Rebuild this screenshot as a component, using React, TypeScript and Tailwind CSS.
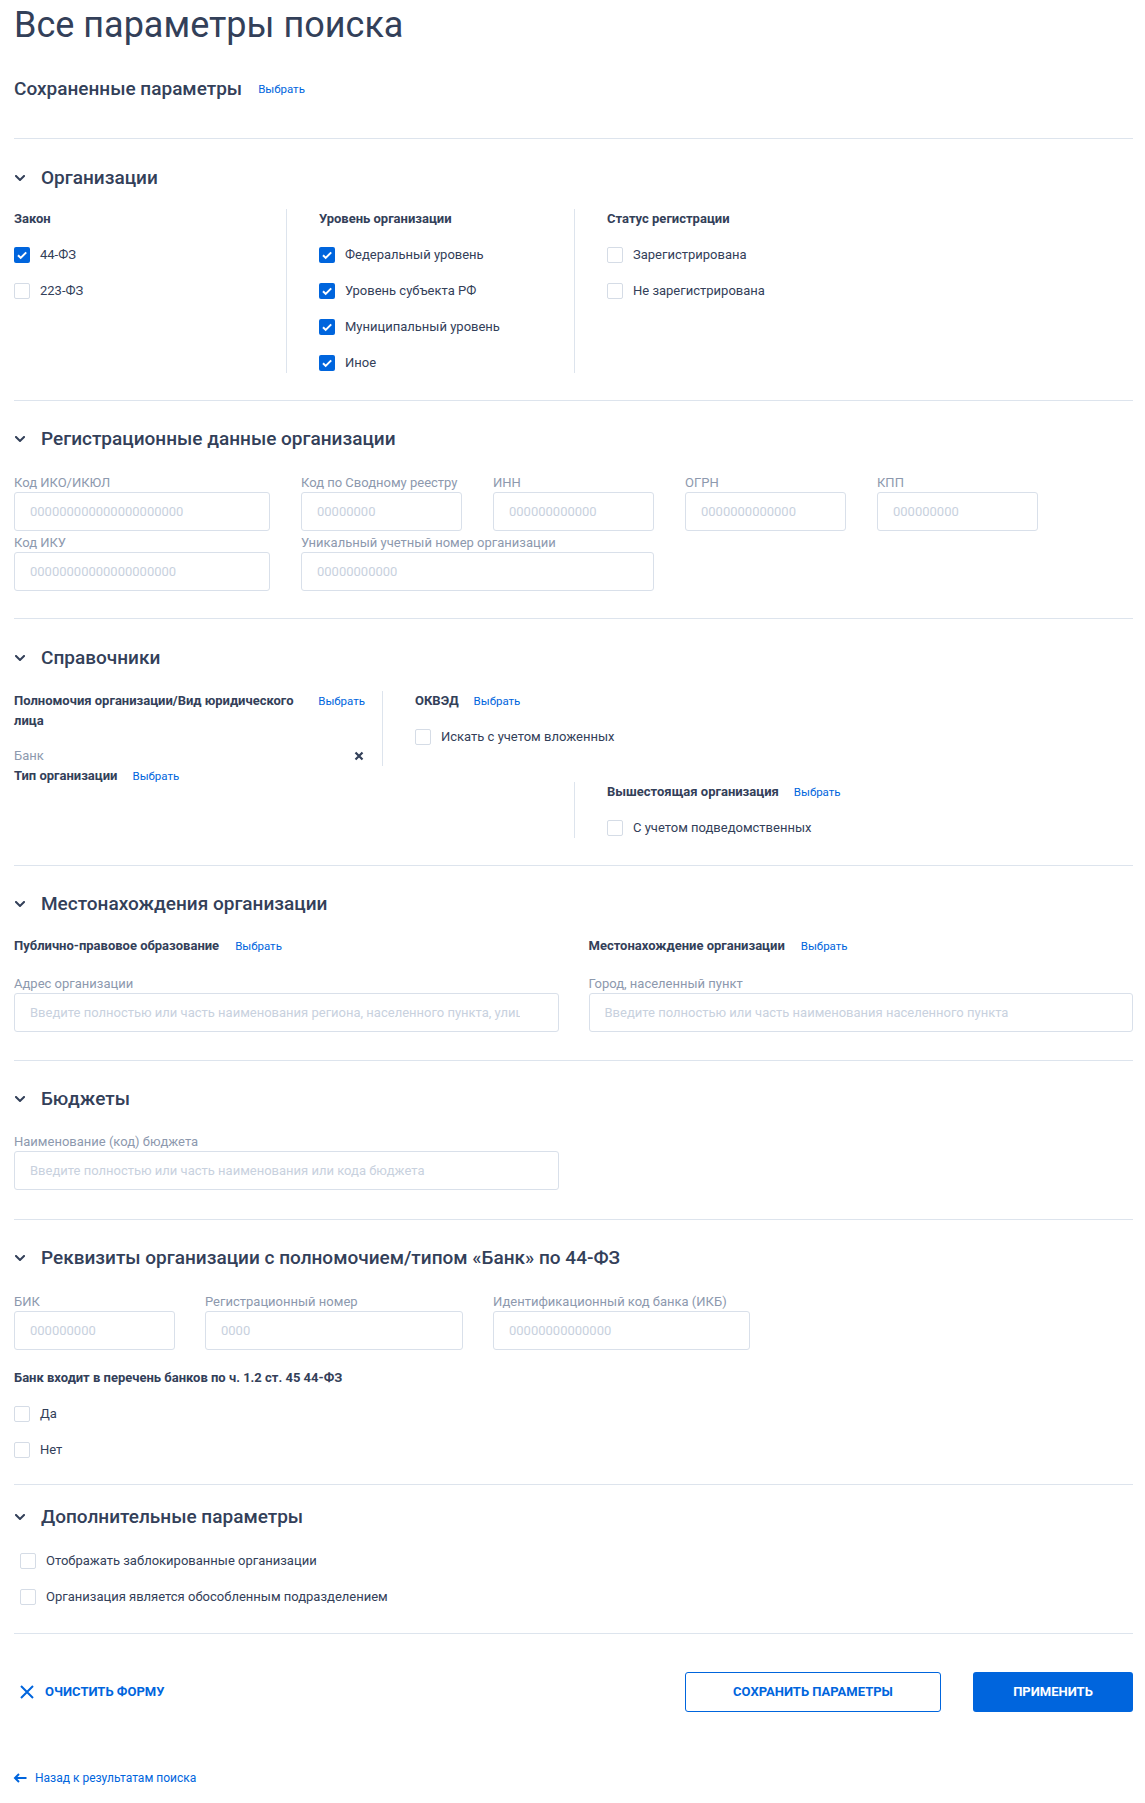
import React from "react";

function Chevron() {
  return (
    <svg width="10" height="6" viewBox="0 0 10 6" className="shrink-0 ml-[1px]">
      <path d="M1 1l4 4 4-4" fill="none" stroke="#334059" strokeWidth="2" strokeLinecap="square" />
    </svg>
  );
}

function Heading({ children }: { children: React.ReactNode }) {
  return (
    <div className="flex items-center h-6 gap-[16px]">
      <Chevron />
      <span className="text-[19px] leading-6 font-medium text-[#334059]">{children}</span>
    </div>
  );
}

function Check({ checked, label }: { checked?: boolean; label: string }) {
  return (
    <div className="flex items-center h-5 gap-[10px]">
      {checked ? (
        <span className="w-4 h-4 rounded-[2px] bg-[#0065dd] flex items-center justify-center shrink-0">
          <svg width="16" height="16" viewBox="0 0 16 16">
            <path d="M4 8.2l2.7 2.7L12.2 5.4" fill="none" stroke="#ffffff" strokeWidth="2" />
          </svg>
        </span>
      ) : (
        <span className="w-4 h-4 rounded-[2px] border border-[#d5dce6] bg-white shrink-0" />
      )}
      <span className="text-[13px] leading-5 text-[#334059] whitespace-nowrap">{label}</span>
    </div>
  );
}

function Pick() {
  return <span className="text-[11.5px] leading-5 text-[#0065dd] whitespace-nowrap cursor-pointer">Выбрать</span>;
}

function ColHead({ children }: { children: React.ReactNode }) {
  return <div className="text-[13px] leading-5 font-bold text-[#334059] whitespace-nowrap">{children}</div>;
}

function Field({ label, ph, cls, inputCls }: { label: string; ph: string; cls: string; inputCls?: string }) {
  return (
    <div className={cls}>
      <div className="text-[13px] leading-[19px] text-[#8d99ae] whitespace-nowrap">{label}</div>
      <input
        className={
          "block w-full h-[39px] border border-[#d9e0ea] rounded-[3px] pl-[15px] text-[13px] text-[#334059] placeholder:text-[#c8d1de] outline-none bg-white " +
          (inputCls ?? "pr-[15px]")
        }
        placeholder={ph}
      />
    </div>
  );
}

export default function App() {
  return (
    <div className="min-h-[1803px] bg-white font-['Roboto',sans-serif] text-[#334059] pl-[14px]">
      <div className="w-[1119px]">
        <h1 className="text-[36px] leading-[50px] font-normal text-[#334059]">Все параметры поиска</h1>
        <div className="mt-[27px] flex items-center h-6 gap-4">
          <span className="text-[19px] leading-6 font-medium">Сохраненные параметры</span>
          <Pick />
        </div>

        {/* Организации */}
        <div className="mt-[37px] border-t border-[#dde4ed] pt-[27px] pb-[27px]">
          <Heading>Организации</Heading>
          <div className="mt-[19px] flex">
            <div className="w-[272px]">
              <ColHead>Закон</ColHead>
              <div className="mt-4 flex flex-col gap-4">
                <Check checked label="44-ФЗ" />
                <Check label="223-ФЗ" />
              </div>
            </div>
            <div className="w-[288px] border-l border-[#dde4ed] pl-8">
              <ColHead>Уровень организации</ColHead>
              <div className="mt-4 flex flex-col gap-4">
                <Check checked label="Федеральный уровень" />
                <Check checked label="Уровень субъекта РФ" />
                <Check checked label="Муниципальный уровень" />
                <Check checked label="Иное" />
              </div>
            </div>
            <div className="border-l border-[#dde4ed] pl-8">
              <ColHead>Статус регистрации</ColHead>
              <div className="mt-4 flex flex-col gap-4">
                <Check label="Зарегистрирована" />
                <Check label="Не зарегистрирована" />
              </div>
            </div>
          </div>
        </div>

        {/* Регистрационные данные */}
        <div className="border-t border-[#dde4ed] pt-[26px] pb-[27px]">
          <Heading>Регистрационные данные организации</Heading>
          <div className="mt-[22px] flex flex-col gap-[2px]">
            <div className="flex gap-[31px]">
              <Field cls="w-[256px]" label="Код ИКО/ИКЮЛ" ph="000000000000000000000" />
              <Field cls="w-[161px]" label="Код по Сводному реестру" ph="00000000" />
              <Field cls="w-[161px]" label="ИНН" ph="000000000000" />
              <Field cls="w-[161px]" label="ОГРН" ph="0000000000000" />
              <Field cls="w-[161px]" label="КПП" ph="000000000" />
            </div>
            <div className="flex gap-[31px]">
              <Field cls="w-[256px]" label="Код ИКУ" ph="00000000000000000000" />
              <Field cls="w-[353px]" label="Уникальный учетный номер организации" ph="00000000000" />
            </div>
          </div>
        </div>

        {/* Справочники */}
        <div className="border-t border-[#dde4ed] pt-[27px] pb-[27px]">
          <Heading>Справочники</Heading>
          <div className="mt-[21px]">
            <div className="flex">
              <div className="w-[368px] pr-[17px]">
                <div className="flex justify-between items-start">
                  <div className="text-[13px] leading-5 font-bold">
                    Полномочия организации/Вид юридического
                    <br />
                    лица
                  </div>
                  <Pick />
                </div>
                <div className="mt-[15px] flex items-center justify-between h-5">
                  <span className="text-[13px] leading-5 text-[#8d99ae]">Банк</span>
                  <svg width="10" height="10" viewBox="0 0 10 10" className="mr-[1px]">
                    <path d="M1.5 1.5l7 7M8.5 1.5l-7 7" stroke="#334059" strokeWidth="2.2" />
                  </svg>
                </div>
              </div>
              <div className="border-l border-[#dde4ed] pl-8">
                <div className="flex items-center h-5 gap-[15px]">
                  <ColHead>ОКВЭД</ColHead>
                  <Pick />
                </div>
                <div className="mt-4">
                  <Check label="Искать с учетом вложенных" />
                </div>
              </div>
            </div>
            <div className="flex">
              <div className="w-[560px]">
                <div className="flex items-center h-5 gap-[15px]">
                  <ColHead>Тип организации</ColHead>
                  <Pick />
                </div>
              </div>
              <div className="mt-4 border-l border-[#dde4ed] pl-8">
                <div className="flex items-center h-5 gap-[15px]">
                  <ColHead>Вышестоящая организация</ColHead>
                  <Pick />
                </div>
                <div className="mt-4">
                  <Check label="С учетом подведомственных" />
                </div>
              </div>
            </div>
          </div>
        </div>

        {/* Местонахождения */}
        <div className="border-t border-[#dde4ed] pt-[26px] pb-[28px]">
          <Heading>Местонахождения организации</Heading>
          <div className="mt-[20px] grid grid-cols-2 gap-[30px]">
            <div>
              <div className="flex items-center h-5 gap-4">
                <ColHead>Публично-правовое образование</ColHead>
                <Pick />
              </div>
              <div className="mt-[18px]">
                <Field
                  cls="w-full"
                  inputCls="pr-[38px]"
                  label="Адрес организации"
                  ph="Введите полностью или часть наименования региона, населенного пункта, улицы"
                />
              </div>
            </div>
            <div>
              <div className="flex items-center h-5 gap-4">
                <ColHead>Местонахождение организации</ColHead>
                <Pick />
              </div>
              <div className="mt-[18px]">
                <Field
                  cls="w-full"
                  label="Город, населенный пункт"
                  ph="Введите полностью или часть наименования населенного пункта"
                />
              </div>
            </div>
          </div>
        </div>

        {/* Бюджеты */}
        <div className="border-t border-[#dde4ed] pt-[26px] pb-[29px]">
          <Heading>Бюджеты</Heading>
          <div className="mt-[21px]">
            <Field
              cls="w-[545px]"
              label="Наименование (код) бюджета"
              ph="Введите полностью или часть наименования или кода бюджета"
            />
          </div>
        </div>

        {/* Реквизиты */}
        <div className="border-t border-[#dde4ed] pt-[26px] pb-[24px]">
          <Heading>Реквизиты организации с полномочием/типом «Банк» по 44-ФЗ</Heading>
          <div className="mt-[22px] flex gap-[30px]">
            <Field cls="w-[161px]" label="БИК" ph="000000000" />
            <Field cls="w-[258px]" label="Регистрационный номер" ph="0000" />
            <Field cls="w-[257px]" label="Идентификационный код банка (ИКБ)" ph="00000000000000" />
          </div>
          <div className="mt-[18px]">
            <ColHead>Банк входит в перечень банков по ч. 1.2 ст. 45 44-ФЗ</ColHead>
          </div>
          <div className="mt-4 flex flex-col gap-4">
            <Check label="Да" />
            <Check label="Нет" />
          </div>
        </div>

        {/* Дополнительные параметры */}
        <div className="border-t border-[#dde4ed] pt-[20px] pb-[26px]">
          <Heading>Дополнительные параметры</Heading>
          <div className="mt-[22px] pl-[6px] flex flex-col gap-4">
            <Check label="Отображать заблокированные организации" />
            <Check label="Организация является обособленным подразделением" />
          </div>
        </div>

        {/* Footer */}
        <div className="border-t border-[#dde4ed] pt-[38px]">
          <div className="flex items-center justify-between">
            <div className="flex items-center gap-[11px] pl-[6px] cursor-pointer">
              <svg width="14" height="14" viewBox="0 0 14 14">
                <path d="M1 1l12 12M13 1L1 13" stroke="#0065dd" strokeWidth="2" />
              </svg>
              <span className="text-[13px] font-bold text-[#0065dd] uppercase leading-5">Очистить форму</span>
            </div>
            <div className="flex items-center gap-8">
              <button className="w-[256px] h-10 border border-[#0065dd] rounded-[3px] bg-white text-[13px] font-bold text-[#0065dd] uppercase">
                Сохранить параметры
              </button>
              <button className="w-[160px] h-10 rounded-[3px] bg-[#0065dd] text-[13px] font-bold text-white uppercase">
                Применить
              </button>
            </div>
          </div>
          <div className="mt-[64px] pb-[16px] flex items-center h-5 gap-[8px] -ml-[1px] cursor-pointer">
            <svg width="14" height="10" viewBox="0 0 14 10">
              <path d="M13.5 5H2M6 1L2 5l4 4" fill="none" stroke="#0065dd" strokeWidth="2" />
            </svg>
            <span className="text-[12px] leading-5 text-[#0065dd]">Назад к результатам поиска</span>
          </div>
        </div>
      </div>
    </div>
  );
}
